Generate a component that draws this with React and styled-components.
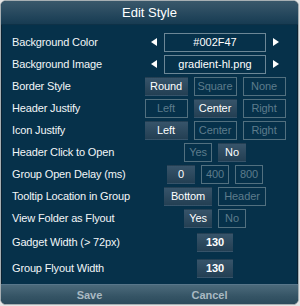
import React from 'react'
import styled, { createGlobalStyle } from 'styled-components'

const GlobalStyle = createGlobalStyle`
  html, body {
    margin: 0;
    padding: 0;
    background: #e4e4e4;
  }
`

const Panel = styled.div`
  box-sizing: border-box;
  width: 299px;
  height: 305px;
  border: 1px solid #a7afb3;
  border-radius: 6px;
  background: #06314a;
  box-shadow: inset 0 0 0 1px #0b2232;
  display: flex;
  flex-direction: column;
  overflow: hidden;
  font-family: "Liberation Sans", Arial, sans-serif;
  color: #ffffff;
`

const Header = styled.div`
  height: 23px;
  display: flex;
  align-items: center;
  justify-content: center;
  font-size: 13px;
  background: linear-gradient(#3a586b, #21445a 70%, #173b52);
  border-bottom: 1px solid #0e3147;
`

const Body = styled.div`
  flex: 1;
  padding: 6px 0 0 11px;
`

const Row = styled.div`
  display: grid;
  grid-template-columns: 132px 142px;
  align-items: center;
  height: ${p => (p.$tall ? '26px' : '22px')};
`

const Label = styled.div`
  font-size: 11px;
  letter-spacing: -0.15px;
  color: #f2f6f8;
`

const Controls = styled.div`
  display: flex;
  justify-content: center;
  align-items: center;
  gap: 6px;
`

const Btn = styled.div`
  box-sizing: border-box;
  width: ${p => p.$w || 43}px;
  height: 19px;
  display: flex;
  align-items: center;
  justify-content: center;
  font-size: 11px;
  letter-spacing: -0.1px;
  font-weight: ${p => (p.$bold ? 'bold' : 'normal')};
  border: 1px solid ${p => (p.$on ? 'transparent' : '#52707f')};
  background: ${p => (p.$on ? 'linear-gradient(#37546a, #233f53)' : 'transparent')};
  color: ${p => (p.$on ? '#ffffff' : '#5d7c8c')};
`

const ValueBox = styled.div`
  box-sizing: border-box;
  width: 102px;
  height: 19px;
  margin: 0 1px;
  display: flex;
  align-items: center;
  justify-content: center;
  font-size: 11px;
  border: 1px solid #6c8796;
  color: #ffffff;
`

const Arrow = ({ dir }) => (
  <svg width="6" height="8" viewBox="0 0 6 8">
    {dir === 'left'
      ? <polygon points="6,0 6,8 0,4" fill="#ffffff" />
      : <polygon points="0,0 0,8 6,4" fill="#ffffff" />}
  </svg>
)

const Footer = styled.div`
  height: 19px;
  display: flex;
  justify-content: center;
  background: linear-gradient(#4c6a7b, #355465 60%, #2b4a5c);
  border-top: 1px solid #58768a;
`

const FootBtn = styled.div`
  width: 120px;
  display: flex;
  align-items: center;
  justify-content: center;
  font-size: 11px;
  font-weight: bold;
  color: #a9b9c2;
`

const Choice = ({ options, active, w }) => (
  <Controls>
    {options.map(o => (
      <Btn key={o} $w={w} $on={o === active}>{o}</Btn>
    ))}
  </Controls>
)

const Picker = ({ value }) => (
  <Controls>
    <Arrow dir="left" />
    <ValueBox>{value}</ValueBox>
    <Arrow dir="right" />
  </Controls>
)

export default function App() {
  return (
    <>
      <GlobalStyle />
      <Panel>
        <Header>Edit Style</Header>
        <Body>
          <Row>
            <Label>Background Color</Label>
            <Picker value="#002F47" />
          </Row>
          <Row>
            <Label>Background Image</Label>
            <Picker value="gradient-hl.png" />
          </Row>
          <Row>
            <Label>Border Style</Label>
            <Choice options={['Round', 'Square', 'None']} active="Round" />
          </Row>
          <Row>
            <Label>Header Justify</Label>
            <Choice options={['Left', 'Center', 'Right']} active="Center" />
          </Row>
          <Row>
            <Label>Icon Justify</Label>
            <Choice options={['Left', 'Center', 'Right']} active="Left" />
          </Row>
          <Row>
            <Label>Header Click to Open</Label>
            <Choice options={['Yes', 'No']} active="No" w={28} />
          </Row>
          <Row>
            <Label>Group Open Delay (ms)</Label>
            <Choice options={['0', '400', '800']} active="0" w={28} />
          </Row>
          <Row>
            <Label>Tooltip Location in Group</Label>
            <Choice options={['Bottom', 'Header']} active="Bottom" w={48} />
          </Row>
          <Row>
            <Label>View Folder as Flyout</Label>
            <Choice options={['Yes', 'No']} active="Yes" w={28} />
          </Row>
          <Row $tall>
            <Label>Gadget Width (&gt; 72px)</Label>
            <Controls><Btn $on $bold $w={36}>130</Btn></Controls>
          </Row>
          <Row $tall>
            <Label>Group Flyout Width</Label>
            <Controls><Btn $on $bold $w={36}>130</Btn></Controls>
          </Row>
        </Body>
        <Footer>
          <FootBtn>Save</FootBtn>
          <FootBtn>Cancel</FootBtn>
        </Footer>
      </Panel>
    </>
  )
}
